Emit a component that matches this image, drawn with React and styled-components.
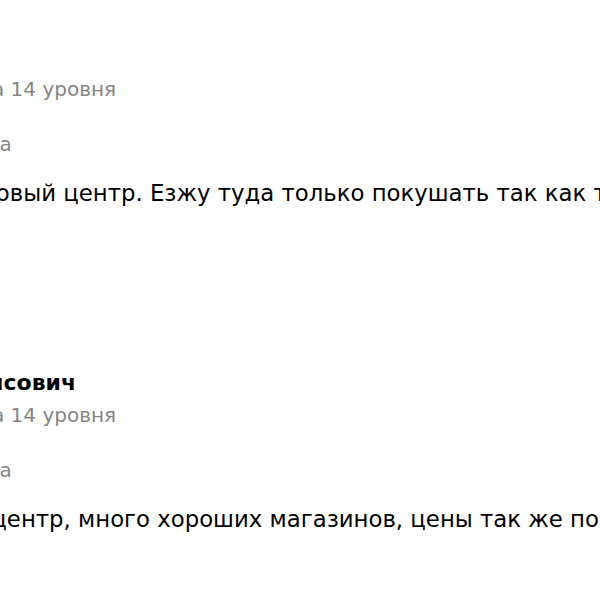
import React from "react";
import styled, { createGlobalStyle } from "styled-components";

const Global = createGlobalStyle`
  html, body { margin: 0; padding: 0; background: #fff; }
  body { width: 600px; height: 600px; overflow: hidden; font-family: "DejaVu Sans", "Noto Sans", sans-serif; }
`;

const Feed = styled.div`
  display: flex;
  flex-direction: column;
  margin-left: -208px;
  padding-top: 41px;
  width: 1200px;
`;

const Review = styled.article`
  display: flex;
  flex-direction: column;
  margin-bottom: 158px;
`;

const Header = styled.div`
  display: flex;
  align-items: center;
  gap: 14px;
`;

const Avatar = styled.div`
  width: 44px;
  height: 44px;
  border-radius: 50%;
  background: #e6e6e6;
`;

const Author = styled.div`
  display: flex;
  flex-direction: column;
`;

const Name = styled.div`
  font-size: 22px;
  line-height: 32px;
  font-weight: 700;
  color: #000;
`;

const Level = styled.div`
  font-size: 20px;
  line-height: 32px;
  color: #858585;
`;

const Meta = styled.div`
  margin-top: 24px;
  display: flex;
  align-items: center;
  gap: 24px;
  font-size: 20px;
  line-height: 30px;
  color: #858585;
`;

const Stars = styled.div`
  display: flex;
  gap: 2px;
  width: 100px;
  color: #fc0;
  font-size: 18px;
`;

const Text = styled.p`
  margin: 18px 0 0 26px;
  font-size: 22.8px;
  line-height: 32px;
  color: #000;
  white-space: nowrap;
`;

const reviews = [
  {
    name: "Ирина",
    level: "Знаток города 14 уровня",
    date: "15 марта",
    text: "Неплохой торговый центр. Езжу туда только покушать так как тут много кафе и ресторанов.",
  },
  {
    name: "Вадим Борисович",
    level: "Знаток города 14 уровня",
    date: "12 марта",
    text: "Симпатичный центр, много хороших магазинов, цены так же по карману.",
  },
];

export default function App() {
  return (
    <>
      <Global />
      <Feed>
        {reviews.map((r) => (
          <Review key={r.date}>
            <Header>
              <Avatar />
              <Author>
                <Name>{r.name}</Name>
                <Level>{r.level}</Level>
              </Author>
            </Header>
            <Meta>
              <Stars>★★★★★</Stars>
              <span>{r.date}</span>
            </Meta>
            <Text>{r.text}</Text>
          </Review>
        ))}
      </Feed>
    </>
  );
}
